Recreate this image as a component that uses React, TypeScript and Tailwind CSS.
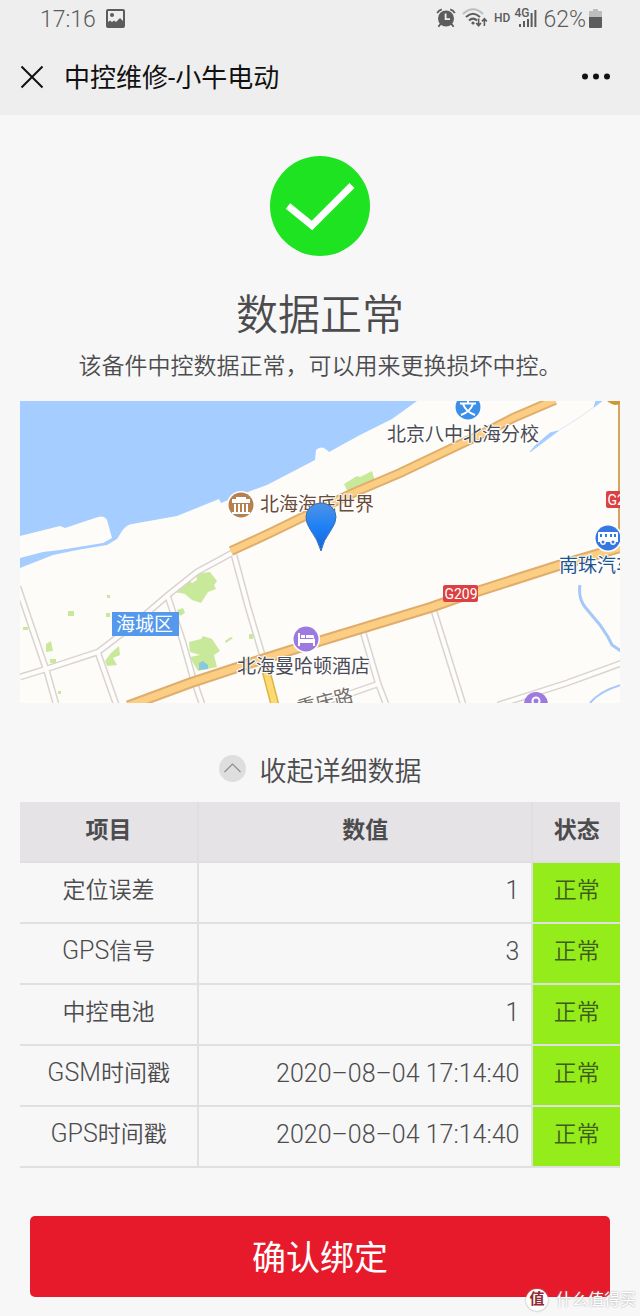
const rows = [
  { prefix: "", name: "定位误差", value: "1", status: "正常" },
  { prefix: "GPS", name: "信号", value: "3", status: "正常" },
  { prefix: "", name: "中控电池", value: "1", status: "正常" },
  { prefix: "GSM", name: "时间戳", value: "2020–08–04 17:14:40", status: "正常" },
  { prefix: "GPS", name: "时间戳", value: "2020–08–04 17:14:40", status: "正常" },
]

// minor streets, drawn twice: grey casing first, white on top
const streets = [
  "M0 276L23 269L78 251L112 225L148 194L177 171L212 152",
  "M-2 186L27 271L36 303",
  "M78 252L96 303",
  "M148 196L163 241L173 277L182 303",
  "M214 154L228 206L242 253",
  "M343 231L358 282L366 303",
  "M358 283L300 303",
  "M414 210L428 255L443 303",
  "M478 304L547 282L602 262",
]

const upperRoad = "M211 150L250 132L287 114L333 92L380 72L443 42L470 29L493 17L535 -1"
const lowerRoad = "M108 305L170 282L240 259L300 240L343 227L412 206L440 196L540 164L602 146"

const StatusBar = () => {
  return (
    <div className="flex items-center justify-between h-10 pl-10 pr-[38px] text-[#5c5c5c]">
      <div className="flex items-center gap-[10px]">
        <span className="text-[23px] leading-[24px] font-light">17:16</span>
        <svg className="w-[19px] h-[19px] mb-1" viewBox="0 0 19 19">
          <rect x="1" y="1" width="17" height="17" rx="1" fill="none" stroke="currentColor" strokeWidth="2" />
          <circle cx="6" cy="6" r="2" fill="currentColor" />
          <path d="M2 17V13L4 11.500L6 13L8 11.500L10 13L14 9L17 12V17Z" fill="currentColor" />
        </svg>
      </div>
      <div className="flex items-center">
        <svg className="w-5 h-5 mb-1" viewBox="0 0 20 20">
          <circle cx="10" cy="10.500" r="8" fill="currentColor" />
          <path d="M1.2 5.2Q2.6 2.2 5.8 1.4M14.2 1.4Q17.4 2.2 18.8 5.2M4.8 15.6L2.4 18.8M15.2 15.6L17.6 18.8" fill="none" stroke="currentColor" strokeWidth="1.8" />
          <path d="M9.6 5.4V11.2H14" fill="none" stroke="#eee" strokeWidth="1.8" />
        </svg>
        <svg className="w-[26px] h-5 ml-[6px] mb-1" viewBox="0 0 26 20" fill="none" strokeWidth="2">
          <path d="M1 6Q11 -3.5 21 6" stroke="#bdbdbd" />
          <path d="M4 9Q11 2.6 18 9" stroke="currentColor" />
          <path d="M7 12.4Q11 8.8 15 12.4" stroke="currentColor" />
          <circle cx="11" cy="15" r="1.6" fill="currentColor" />
          <path d="M16.6 10.5V17.5M14.2 15L16.6 17.8L19 15M22.4 18V11M20 13.4L22.4 10.8L24.8 13.4" stroke="currentColor" strokeWidth="1.6" />
        </svg>
        <span className="ml-[6px] text-[12px] leading-[12px] font-medium mb-1">HD</span>
        <span className="relative ml-1 mb-1">
          <svg className="w-[23px] h-5" viewBox="0 0 23 20" fill="currentColor">
            <path d="M5 16h2v3h-2zM9 13h2v6h-2zM13 11h2v8h-2zM16.6 5h2v14h-2zM20.4 2h2v17h-2z" />
          </svg>
          <span className="absolute -top-[1px] left-0 text-[12px] leading-[12px] font-medium">4G</span>
        </span>
        <span className="ml-[6px] text-[23px] leading-[24px] font-light">62%</span>
        <svg className="w-[13px] h-[19px] ml-[3px] mb-1" viewBox="0 0 13 19">
          <path d="M4 0H9V2H13V8H0V2H4Z" fill="#bdbdbd" />
          <path d="M0 8H13V18Q13 19 12 19H1Q0 19 0 18Z" fill="currentColor" />
        </svg>
      </div>
    </div>
  )
}

const NavBar = () => {
  return (
    <div className="flex items-center h-[75px] pl-5 pr-[29px] text-[#111]">
      <button type="button" aria-label="关闭" className="w-6 h-6 mr-5 mb-0.5">
        <svg viewBox="0 0 24 24" fill="none" stroke="currentColor" strokeWidth="2">
          <path d="M1.5 1.5L22.5 22.5M22.5 1.5L1.5 22.5" />
        </svg>
      </button>
      <h1 className="text-[26px] leading-[36px] font-normal">中控维修-小牛电动</h1>
      <button type="button" aria-label="更多" className="ml-auto w-[30px] h-6 mb-0.5">
        <svg viewBox="0 0 30 24" fill="currentColor">
          <circle cx="4" cy="11.500" r="3" />
          <circle cx="15" cy="11.500" r="3" />
          <circle cx="26" cy="11.500" r="3" />
        </svg>
      </button>
    </div>
  )
}

const LocationMap = () => {
  return (
    <svg className="w-full h-auto mt-[19px] text-[19px]" viewBox="0 0 600 302">
      <rect width="600" height="302" fill="#fefcf8" />

      {/* sea, inlet and streams */}
      <path
        d="M0 0H397L372 18L340 34L309 51Q302 43 296 49L295 59L247 84L233 89L201 102L199 98L157 115L112 123Q106 124 102 130L97 138L87 144L57 149L33 154L0 167V157L23 151L40 149L83 142L92 137L87 119Q84 114 78 116L45 127L40 125L0 135Z"
        fill="#a5cdff"
      />
      <path d="M576 0L574 6L582 0ZM510 51L516 44L530 32L538 30L522 42Z" fill="#a5cdff" stroke="#a5cdff" strokeWidth="1" />
      <path d="M538 30L560 16L574 6" fill="none" stroke="#dbe7f7" strokeWidth="1" />
      <path d="M560 184Q558 197 565 206L580 224L588 236L592 244L601 250" fill="none" stroke="#a5c8f8" strokeWidth="3" />
      <path d="M570 302Q580 290 601 284" fill="none" stroke="#a5c8f8" strokeWidth="2" />

      {/* parks */}
      <g fill="#c8e89a">
        <path d="M324 83L337 75L340 76L352 70L355 80L329 93Z" />
        <path d="M155 191L160 185L166 182L168 178L172 182L177 179L176 174L182 172L190 171L197 180L194 184L196 188L188 191L181 202L172 199L165 193Z" />
        <path d="M169 241L181 238L183 235L192 238L200 250L194 254L197 266L178 270L172 260L170 256L180 254L170 251Z" />
        <path d="M85 260L91 252L99 245L100 254L93 257L97 264L87 265ZM26 243L31 240L33 250L26 251ZM48 210h6v5h-6zM87 194h3v3h-3zM86 212h4v4h-4zM30 258h6v4h-6zM157 209l6-2l2 5l-5 3zM205 240l6-4l2 1l-7 5zM229 233h4v5h-4zM3 226h5v3h-5zM38 290h3v3h-3z" />
      </g>
      <path d="M179 262l4-2l5 4v4l-9 1z" fill="#8cc8dc" />

      {/* streets */}
      {streets.map((d) => (
        <path key={d} d={d} fill="none" stroke="#d9d4cf" strokeWidth="7" />
      ))}
      {streets.map((d) => (
        <path key={d} d={d} fill="none" stroke="#fffdfb" strokeWidth="4" />
      ))}

      {/* main roads */}
      <path d="M244 262L255 304" fill="none" stroke="#dfb445" strokeWidth="9" />
      <path d="M244 262L255 304" fill="none" stroke="#fcda70" strokeWidth="6" />
      <path d="M599 0V148" fill="none" stroke="#d6a45c" strokeWidth="2" />
      <path d={upperRoad} fill="none" stroke="#dfae6c" strokeWidth="10" />
      <path d={upperRoad} fill="none" stroke="#fcce84" strokeWidth="6" />
      <path d={lowerRoad} fill="none" stroke="#dfae6c" strokeWidth="11" />
      <path d={lowerRoad} fill="none" stroke="#fcce84" strokeWidth="7" />
      <path d="M587 0Q596 7 600 2V0Z" fill="#c99a35" />

      {/* points of interest */}
      <circle cx="221" cy="104" r="14" fill="#fff" />
      <circle cx="221" cy="104" r="12.5" fill="#b5814f" />
      <path d="M212 102L212 98L216 98L216 96H226L226 98L230 98L230 102ZM214 103h2v8h-2zM218 103h2v8h-2zM222 103h2v8h-2zM226 103h2v8h-2zM212 111h18v2h-18z" fill="#fff" />

      <circle cx="448" cy="6" r="14" fill="#fff" />
      <circle cx="448" cy="6" r="12.5" fill="#3b8fe8" />
      <path d="M448 -1V2M440 2.5H456M443 3Q446 11 455 14M453 3Q450 11 441 14" fill="none" stroke="#fff" strokeWidth="2" />

      <circle cx="588" cy="137" r="14" fill="#fff" />
      <circle cx="588" cy="137" r="12.5" fill="#3478e0" />
      <path d="M579 131H597Q598 131 598 132V141H578V132Q578 131 579 131Z" fill="#fff" />
      <path d="M580 133h2v3h-2zM585 133h2v3h-2zM590 133h2v3h-2zM594 133h2v3h-2z" fill="#3478e0" />
      <circle cx="583" cy="141" r="2.2" fill="#3478e0" stroke="#fff" strokeWidth="1.4" />
      <circle cx="593" cy="141" r="2.2" fill="#3478e0" stroke="#fff" strokeWidth="1.4" />

      <circle cx="286" cy="238" r="14" fill="#fff" />
      <circle cx="286" cy="238" r="12.5" fill="#9d7ae0" />
      <path d="M278 232h2v6h13v-1q2 0 2 2v6h-2v-3h-13v3h-2zM281 234h4v3h-4zM286 234h7q1 0 1 2v1h-8z" fill="#fff" />

      <circle cx="516" cy="303" r="12" fill="#9d7ae0" />
      <circle cx="516" cy="300" r="3.5" fill="none" stroke="#fff" strokeWidth="2" />

      {/* labels */}
      <g className="[paint-order:stroke]" stroke="#fff" strokeWidth="2" strokeLinejoin="round">
        <text x="367" y="40" fill="#4b4b55">北京八中北海分校</text>
        <text x="240" y="110" fill="#6b4a38">北海海底世界</text>
        <text x="217" y="272" fill="#4b4b55">北海曼哈顿酒店</text>
        <text x="539" y="171" fill="#1c548f">南珠汽车</text>
        <text x="279" y="314" fill="#75706a" transform="rotate(-14 279 314)">重庆路</text>
      </g>
      <rect x="92" y="211" width="67" height="24" fill="#5499ec" />
      <text x="96" y="230" fill="#fff">海城区</text>

      <g fill="#fff" textAnchor="middle">
        <rect x="423" y="184" width="35" height="17" rx="2" fill="#dc4040" />
        <text x="441" y="198" fontSize="14">G209</text>
        <rect x="586" y="90" width="35" height="17" rx="2" fill="#dc4040" />
        <text x="604" y="104" fontSize="14">G209</text>
      </g>

      {/* current position */}
      <defs>
        <linearGradient id="pin" x1="0" y1="0" x2="0" y2="1">
          <stop offset="0" stopColor="#4f93e6" />
          <stop offset="0.5" stopColor="#1f80f5" />
          <stop offset="1" stopColor="#1565d8" />
        </linearGradient>
      </defs>
      <path d="M301 150Q298 139 290 128Q286 122 286 116A15 14 0 0 1 316 116Q316 122 311 129Q303 140 301 150Z" fill="url(#pin)" stroke="#3470b8" strokeWidth="1" />
    </svg>
  )
}

const DetailTable = () => {
  return (
    <table className="w-full mt-[10px] table-fixed border-collapse text-[23px] leading-[30px] text-[#4c4c4e]">
      <thead>
        <tr className="bg-[#e5e3e6]">
          <th className="w-[29.7%] h-[60px] pb-0.5 font-bold border-r-2 border-b-2 border-[#e0dee1]">项目</th>
          <th className="pb-0.5 font-bold border-r-2 border-b-2 border-[#e0dee1]">数值</th>
          <th className="w-[14.6%] pb-0.5 font-bold border-b-2 border-[#e0dee1]">状态</th>
        </tr>
      </thead>
      <tbody className="font-[350]">
        {rows.map((row, i) => (
          <tr key={i} className="border-b-2 border-[#e0e0e0]">
            <td className="h-[61px] pb-1 text-center border-r-2 border-[#e0e0e0]">
              {row.prefix && <span className="text-[25px]">{row.prefix}</span>}
              {row.name}
            </td>
            <td className="pb-1 pr-3 text-right text-[25px] border-r-2 border-[#e0e0e0]">{row.value}</td>
            <td className="pb-1 text-center bg-[#94ec1a] text-[#3f5c1c]">{row.status}</td>
          </tr>
        ))}
      </tbody>
    </table>
  )
}

const App = () => {
  return (
    <div className="relative min-h-screen bg-[#f7f7f7] font-[Roboto,'Noto_Sans_CJK_SC',sans-serif]">
      <header className="bg-[#eee]">
        <StatusBar />
        <NavBar />
      </header>

      <main className="flex flex-col items-center px-5 pt-[41px] pb-[19px] text-[#4c4c4e]">
        <svg className="w-[100px] h-[100px]" viewBox="0 0 100 100">
          <circle cx="50" cy="50" r="50" fill="#1de321" />
          <path d="M18 50L42 69.500L82 29.500" fill="none" stroke="#fff" strokeWidth="7" />
        </svg>
        <h2 className="mt-[30px] text-[42px] leading-[60px] font-[350]">数据正常</h2>
        <p className="mt-1.5 text-[23px] leading-[30px] font-[350]">该备件中控数据正常，可以用来更换损坏中控。</p>

        <LocationMap />

        <button type="button" className="flex items-center gap-[14px] h-10 mt-[49px] text-[27px] font-[350]">
          <svg className="w-[27px] h-[27px] mb-2" viewBox="0 0 27 27">
            <circle cx="13.500" cy="13.500" r="13.500" fill="#dedede" />
            <path d="M5.500 17L13.500 9L21.500 17" fill="none" stroke="#8f8f8f" strokeWidth="1.200" />
          </svg>
          收起详细数据
        </button>

        <DetailTable />

        <div className="w-full mt-12 px-[10px]">
          <button type="button" className="w-full h-[81px] pt-1 rounded-[5px] bg-[#e71a2b] text-white text-[34px] font-normal">确认绑定</button>
        </div>
      </main>

      <div className="absolute right-1 bottom-1 flex items-center gap-2 text-white text-[16px] leading-[24px] [text-shadow:0_0_2px_#999]">
        <span className="w-[22px] h-[22px] rounded-full bg-white text-[#8f2a33] text-center text-[15px] leading-[20px] font-bold shadow-[0_0_2px_#999] [text-shadow:none]">值</span>
        什么值得买
      </div>
    </div>
  )
}

export default App
